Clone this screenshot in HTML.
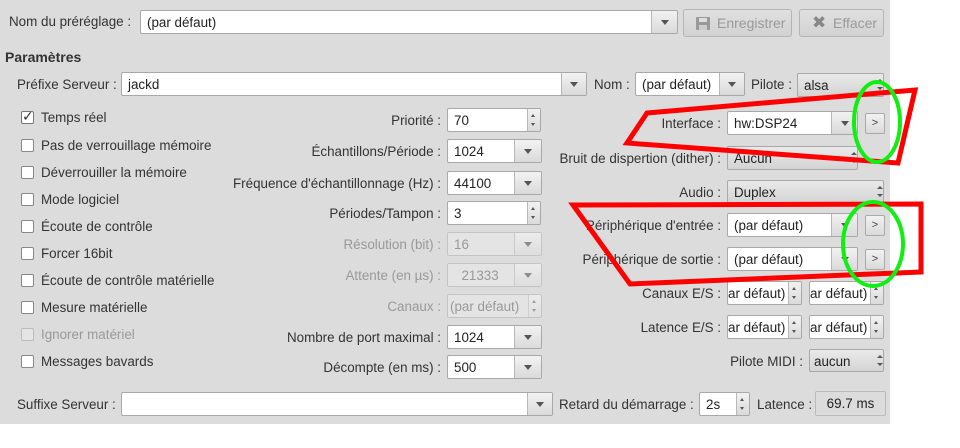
<!DOCTYPE html>
<html><head><meta charset="utf-8"><style>
body{margin:0;width:960px;height:448px;background:#fff;position:relative;overflow:hidden;font-family:"Liberation Sans","DejaVu Sans",sans-serif;font-size:13.4px;color:#333}
#bg{position:absolute;left:0;top:0;width:890px;height:424px;background:#dcdcdc}
.a{position:absolute;white-space:nowrap}
.l{position:absolute;white-space:nowrap;line-height:25px;height:24px}
.r{text-align:right}
.f{position:absolute;background:#fff;border:1px solid #a8a8a8;border-radius:2px;box-sizing:border-box;line-height:23px;padding-left:6px;overflow:hidden;white-space:nowrap;color:#222}
.g{background:linear-gradient(#eaeaea,#d4d4d4)}
.dis{color:#999;background:#e4e4e4;border-color:#c4c4c4}
.arr{position:absolute;top:0;bottom:0;right:0;border-left:1px solid #b8b8b8;background:linear-gradient(#f2f2f2,#dadada)}
.arr:after{content:"";position:absolute;left:50%;top:50%;margin:-2px 0 0 -4px;border:4px solid transparent;border-top:5px solid #555;border-bottom:0}
.spn{position:absolute;top:0;bottom:0;right:0;width:12px;border-left:1px solid #b8b8b8;background:linear-gradient(#f2f2f2,#dadada)}
.spn:before{content:"";position:absolute;left:3px;top:5px;border:2.5px solid transparent;border-bottom:3px solid #555;border-top:0}
.spn:after{content:"";position:absolute;left:3px;bottom:5px;border:2.5px solid transparent;border-top:3px solid #555;border-bottom:0}
.ud{position:absolute;right:6px;top:50%;}
.ud:before{content:"";position:absolute;left:0;top:-6px;border:3px solid transparent;border-bottom:3px solid #555;border-top:0}
.ud:after{content:"";position:absolute;left:0;top:2px;border:3px solid transparent;border-top:3px solid #555;border-bottom:0}
.cb{position:absolute;width:13px;height:13px;border:1px solid #888;border-radius:2px;background:#fff;box-sizing:border-box}
.btn{position:absolute;border:1px solid #b4b4b4;border-radius:3px;background:linear-gradient(#e0e0e0,#d2d2d2);box-sizing:border-box;color:#999;line-height:26px;font-size:14px}
.sb{position:absolute;width:20px;height:21px;border:1px solid #aaa;border-radius:2px;background:linear-gradient(#f2f2f2,#dadada);box-sizing:border-box;text-align:center;line-height:18px;font-size:11px;color:#444}
</style></head><body>
<div id="bg"></div>

<div class="l" style="left:9px;top:9px">Nom du préréglage :</div>
<div class="f" style="left:140px;top:10px;width:538px;height:24px">(par défaut)<div class="arr" style="width:25px"></div></div>
<div class="btn" style="left:683px;top:9px;width:109px;height:28px;padding-left:33px">Enregistrer
<div style="position:absolute;left:12px;top:7px;width:14px;height:13px;background:#999;border-radius:1px"><div style="position:absolute;left:3px;top:1px;width:8px;height:4px;background:#ddd"></div><div style="position:absolute;left:3px;top:8px;width:8px;height:5px;background:#ccc"></div></div></div>
<div class="btn" style="left:799px;top:9px;width:85px;height:28px;padding-left:33px">Effacer<span style="position:absolute;left:12px;top:0;font-size:17px;color:#888">✖</span></div>

<div class="a" style="left:5px;top:49px;font-weight:bold;font-size:14px;color:#333">Paramètres</div>

<div class="l" style="left:17px;top:72px">Préfixe Serveur :</div>
<div class="f" style="left:121px;top:72px;width:466px;height:24px">jackd<div class="arr" style="width:24px"></div></div>
<div class="l" style="left:594px;top:72px">Nom :</div>
<div class="f" style="left:635px;top:72px;width:110px;height:24px">(par défaut)<div class="arr" style="width:24px"></div></div>
<div class="l" style="left:751px;top:72px">Pilote :</div>
<div class="f g" style="left:797px;top:73px;width:87px;height:24px">alsa<div class="ud"></div></div>

<div class="cb" style="left:21px;top:111px;border-color:#777"><span style="position:absolute;left:0;top:-4px;font-size:14px;color:#333">✓</span></div>
<div class="l" style="left:41px;top:105px">Temps réel</div>
<div class="cb" style="left:21px;top:139px"></div><div class="l" style="left:41px;top:133px">Pas de verrouillage mémoire</div>
<div class="cb" style="left:21px;top:166px"></div><div class="l" style="left:41px;top:160px">Déverrouiller la mémoire</div>
<div class="cb" style="left:21px;top:193px"></div><div class="l" style="left:41px;top:187px">Mode logiciel</div>
<div class="cb" style="left:21px;top:220px"></div><div class="l" style="left:41px;top:214px">Écoute de contrôle</div>
<div class="cb" style="left:21px;top:247px"></div><div class="l" style="left:41px;top:241px">Forcer 16bit</div>
<div class="cb" style="left:21px;top:274px"></div><div class="l" style="left:41px;top:268px">Écoute de contrôle matérielle</div>
<div class="cb" style="left:21px;top:301px"></div><div class="l" style="left:41px;top:295px">Mesure matérielle</div>
<div class="cb" style="left:21px;top:328px;border-color:#bbb;background:#e4e4e4"></div><div class="l" style="left:41px;top:322px;color:#999">Ignorer matériel</div>
<div class="cb" style="left:21px;top:355px"></div><div class="l" style="left:41px;top:349px">Messages bavards</div>

<div class="l r" style="left:200px;width:241px;top:108px">Priorité :</div>
<div class="f" style="left:447px;top:108px;width:94px;height:24px">70<div class="spn"></div></div>
<div class="l r" style="left:200px;width:241px;top:139px">Échantillons/Période :</div>
<div class="f" style="left:447px;top:139px;width:95px;height:24px">1024<div class="arr" style="width:26px"></div></div>
<div class="l r" style="left:200px;width:241px;top:171px">Fréquence d'échantillonnage (Hz) :</div>
<div class="f" style="left:447px;top:171px;width:95px;height:24px">44100<div class="arr" style="width:26px"></div></div>
<div class="l r" style="left:200px;width:241px;top:201px">Périodes/Tampon :</div>
<div class="f" style="left:447px;top:201px;width:94px;height:24px">3<div class="spn"></div></div>
<div class="l r" style="left:200px;width:241px;top:232px;color:#999">Résolution (bit) :</div>
<div class="f dis" style="left:447px;top:232px;width:95px;height:24px">16<div class="arr" style="width:26px;opacity:.6"></div></div>
<div class="l r" style="left:200px;width:241px;top:263px;color:#999">Attente (en µs) :</div>
<div class="f dis" style="left:447px;top:263px;width:95px;height:24px">&nbsp;&nbsp;21333<div class="arr" style="width:26px;opacity:.6"></div></div>
<div class="l r" style="left:200px;width:241px;top:294px;color:#999">Canaux :</div>
<div class="f dis" style="left:447px;top:294px;width:95px;height:24px;padding-left:2px">(par défaut)<div class="spn" style="opacity:.5"></div></div>
<div class="l r" style="left:200px;width:241px;top:325px">Nombre de port maximal :</div>
<div class="f" style="left:447px;top:325px;width:95px;height:24px">1024<div class="arr" style="width:26px"></div></div>
<div class="l r" style="left:200px;width:241px;top:355px">Décompte (en ms) :</div>
<div class="f" style="left:447px;top:355px;width:95px;height:24px">500<div class="arr" style="width:26px"></div></div>

<div class="l r" style="left:500px;width:221px;top:111px">Interface :</div>
<div class="f" style="left:727px;top:111px;width:131px;height:24px">hw:DSP24<div class="arr" style="width:25px"></div></div>
<div class="sb" style="left:865px;top:113px">&gt;</div>
<div class="l r" style="left:500px;width:221px;top:146px">Bruit de dispertion (dither) :</div>
<div class="f g" style="left:727px;top:146px;width:131px;height:24px">Aucun<div class="ud"></div></div>
<div class="l r" style="left:500px;width:221px;top:180px">Audio :</div>
<div class="f g" style="left:727px;top:180px;width:157px;height:23px">Duplex<div class="ud"></div></div>
<div class="l r" style="left:500px;width:221px;top:213px">Périphérique d'entrée :</div>
<div class="f" style="left:727px;top:213px;width:131px;height:24px">(par défaut)<div class="arr" style="width:25px"></div></div>
<div class="sb" style="left:865px;top:215px">&gt;</div>
<div class="l r" style="left:500px;width:221px;top:247px">Périphérique de sortie :</div>
<div class="f" style="left:727px;top:247px;width:131px;height:24px">(par défaut)<div class="arr" style="width:25px"></div></div>
<div class="sb" style="left:865px;top:249px">&gt;</div>
<div class="l r" style="left:500px;width:221px;top:281px">Canaux E/S :</div>
<div class="f" style="left:727px;top:281px;width:75px;height:24px;padding-left:0">ar défaut)<div class="spn"></div></div>
<div class="f" style="left:809px;top:281px;width:75px;height:24px;padding-left:0">ar défaut)<div class="spn"></div></div>
<div class="l r" style="left:500px;width:221px;top:315px">Latence E/S :</div>
<div class="f" style="left:727px;top:315px;width:75px;height:24px;padding-left:0">ar défaut)<div class="spn"></div></div>
<div class="f" style="left:809px;top:315px;width:75px;height:24px;padding-left:0">ar défaut)<div class="spn"></div></div>
<div class="l r" style="left:600px;width:203px;top:349px">Pilote MIDI :</div>
<div class="f g" style="left:809px;top:349px;width:75px;height:23px;padding-left:4px">aucun<div class="ud"></div></div>

<div class="l" style="left:17px;top:392px">Suffixe Serveur :</div>
<div class="f" style="left:121px;top:392px;width:432px;height:24px"><div class="arr" style="width:24px"></div></div>
<div class="l" style="left:559px;top:392px">Retard du démarrage :</div>
<div class="f" style="left:699px;top:392px;width:51px;height:24px">2s<div class="spn"></div></div>
<div class="l" style="left:757px;top:392px">Latence :</div>
<div class="f" style="left:815px;top:391px;width:71px;height:25px;background:#dcdcdc;border-color:#bbb;text-align:center;padding:0">69.7 ms</div>

<svg style="position:absolute;left:0;top:0" width="960" height="448">
<polygon points="647,113 915,90 898,163 627,143" fill="none" stroke="#f00" stroke-width="5" stroke-linejoin="miter"/>
<polygon points="573,205 921,204 921,272 630,284" fill="none" stroke="#f00" stroke-width="5"/>
<ellipse cx="877" cy="122" rx="23" ry="40" fill="none" stroke="#1e1" stroke-width="4"/>
<ellipse cx="873" cy="244" rx="30" ry="42" fill="none" stroke="#1e1" stroke-width="4"/>
</svg>
</body></html>
